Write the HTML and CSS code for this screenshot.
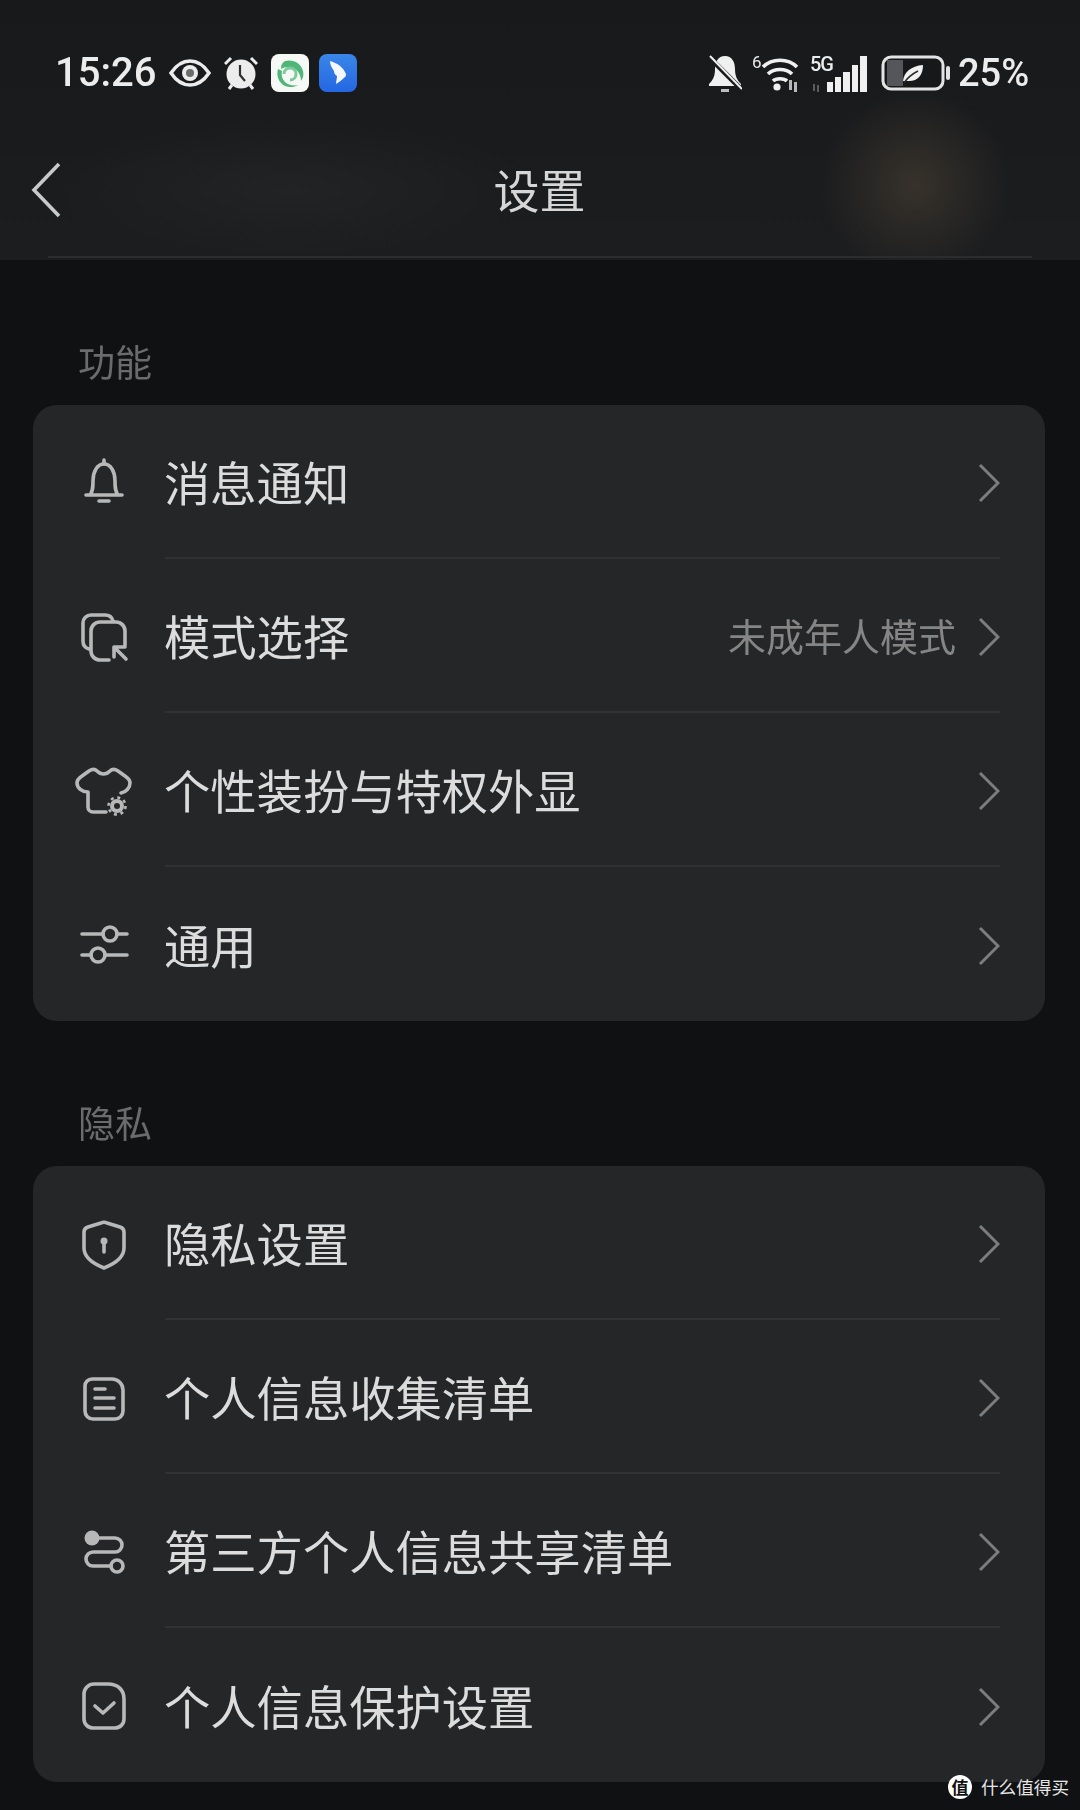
FILE: index.html
```html
<!DOCTYPE html>
<html lang="zh-CN">
<head>
    <meta charset="UTF-8">
    <meta name="viewport" content="width=device-width, initial-scale=1.0">
    <title>设置</title>
    <link rel="stylesheet" href="styles.css">
</head>
<body>
    <header class="header">
        <div class="status-bar">
            <div class="status-left">
                <span class="time">15:26</span>
                <svg class="st-eye" viewBox="0 0 42 28"><path d="M2 14C8 5 14 2 21 2s13 3 19 12c-6 9-12 12-19 12S8 23 2 14Z" fill="none" stroke="#ececec" stroke-width="3.5"/><circle cx="21" cy="14" r="8" fill="#ececec"/><circle cx="21" cy="14" r="4" fill="#6b6b6b"/></svg>
                <svg class="st-alarm" viewBox="0 0 34 34"><circle cx="17" cy="18" r="14.5" fill="#ececec"/><path d="M1 8l6-6M33 8l-6-6M5 33l3-4M29 33l-3-4" stroke="#ececec" stroke-width="3"/><path d="M16 9v10l5 6" fill="none" stroke="#2e2f32" stroke-width="2.2"/></svg>
                <svg class="st-app" viewBox="0 0 38 38"><rect width="38" height="38" rx="8" fill="#f6f8f6"/><path d="M14 7c8-2 16 2 18 10 1 4 0 7-2 10 0-6-3-11-8-13-4-2-9-1-12 1 0-4 1-6 4-8Z" fill="#4fb678"/><path d="M7 15c-2 7 1 14 7 17 5 2 10 1 13-1-5 1-10 0-13-3-3-3-4-7-3-11-1-1-3-1-4-2Z" fill="#4fb678"/><path d="M13 20c0-4 3-6 6-6 4 0 6 3 6 6 0 4-3 6-6 6" fill="none" stroke="#7cc99b" stroke-width="3"/></svg>
                <svg class="st-app" viewBox="0 0 38 38"><defs><linearGradient id="blueApp" x1="0" y1="0" x2="0" y2="1"><stop offset="0" stop-color="#3a86e8"/><stop offset="1" stop-color="#2467e2"/></linearGradient></defs><rect width="38" height="38" rx="8" fill="url(#blueApp)"/><path d="M11 7c1 0 3 1 5 2 5 2 9 6 11 11 0 1 0 2-1 3-3 3-6 5-9 7 0-3 1-5 1-8-2-1-3-3-3-5-2-3-4-6-4-10Z" fill="#f4f7fd"/></svg>
            </div>
            <div class="status-right">
                <svg class="st-mute" viewBox="0 0 34 39"><path d="M17 2c7 0 10 6 10 13 0 7 2 11 6 15v2H1v-2c4-4 6-8 6-15 0-7 3-13 10-13Z" fill="#f0f0f0"/><path d="M13 35h8v3h-8z" fill="#bdbdbd"/><path d="M1 3l32 32" stroke="#1a1b1d" stroke-width="5"/><path d="M2 2l32 33" stroke="#f0f0f0" stroke-width="2"/></svg>
                <svg class="st-wifi" viewBox="0 -4 48 46"><text x="0" y="14" class="st-tiny">6</text><path d="M11 13c9-9 25-9 34 0M16 20c6-6 18-6 24 0M21 27c3-3 11-3 14 0" fill="none" stroke="#f0f0f0" stroke-width="3.6"/><circle cx="25" cy="33" r="3.6" fill="#f0f0f0"/><path d="M37 26v10h3V26zM42 28v10h3V28z" fill="#b8b8b8"/></svg>
                <svg class="st-signal" viewBox="0 -4 58 46"><text x="0" y="17" class="st-5g">5G</text><path d="M3 30v7h2v-7zM7 31v7h2v-7z" fill="#5c5c5c"/><path d="M17 28h6v10h-6zM25 23h6v15h-6zM33 18h7v20h-7zM42 11h6v27h-6zM50 2h7v36h-7z" fill="#f0f0f0"/></svg>
                <div class="battery">
                    <svg class="st-batt" viewBox="0 0 70 36"><rect x="2" y="2" width="60" height="32" rx="8" fill="#17181a" stroke="#e4e4e4" stroke-width="3"/><path d="M6 5h16v26H6z" fill="#55565a"/><path d="M22 26c1-9 8-15 20-16 0 10-5 16-14 16-2 0-4 0-6 0Z" fill="#f0f0f0"/><path d="M23 28c4-6 8-9 14-12" fill="none" stroke="#2a2b2d" stroke-width="1.5"/><rect x="65" y="11" width="4" height="14" rx="2" fill="#e4e4e4"/></svg>
                </div>
                <span class="percent">25%</span>
            </div>
        </div>
        <div class="nav">
            <svg class="back" viewBox="0 0 30 56"><path d="M28 2L3 28l25 26" fill="none" stroke="#c9c9c9" stroke-width="3.6"/></svg>
            <h1 class="title">设置</h1>
            <span></span>
        </div>
        <div class="header-line"></div>
    </header>

    <main>
        <section class="section">
            <h2 class="section-label">功能</h2>
            <div class="card">
                <div class="row">
                    <svg class="row-icon" viewBox="0 0 62 62"><path d="M13 42h36M17 42c3-4 3-8 3-14 0-9 4-17 11-17s11 8 11 17c0 6 0 10 3 14"/><path d="M31 7v4M26 48h10"/></svg>
                    <div class="row-body"><span class="row-text">消息通知</span><svg class="chevron" viewBox="0 0 22 40"><path d="M2 2l18 18L2 38"/></svg></div>
                </div>
                <div class="row">
                    <svg class="row-icon" viewBox="0 0 62 62"><path d="M52 38V24a9 9 0 0 0-9-9H27a9 9 0 0 0-9 9v20a9 9 0 0 0 9 9h9"/><path d="M16 42c-4-1-6-4-6-8V16a8 8 0 0 1 8-8h14c4 0 7 2 8 6"/><path d="M42 41l11 11M41 50V40h11"/></svg>
                    <div class="row-body"><span class="row-text">模式选择</span><span class="row-value">未成年人模式</span><svg class="chevron" viewBox="0 0 22 40"><path d="M2 2l18 18L2 38"/></svg></div>
                </div>
                <div class="row">
                    <svg class="row-icon" viewBox="0 0 62 62"><path d="M33 51H20a5 5 0 0 1-5-5V31C9 31 4 27 4 22c0-3 2-5 5-7l7-5c3-2 6-2 8 0 4 4 9 4 13 0 2-2 5-2 8 0l7 5c3 2 5 4 5 7 0 5-4 9-9 10"/><circle cx="44" cy="45" r="5" stroke-width="4"/><circle cx="44" cy="45" r="8.5" stroke-width="2.6" stroke-dasharray="3 3.68" stroke-linecap="butt"/></svg>
                    <div class="row-body"><span class="row-text">个性装扮与特权外显</span><svg class="chevron" viewBox="0 0 22 40"><path d="M2 2l18 18L2 38"/></svg></div>
                </div>
                <div class="row">
                    <svg class="row-icon" viewBox="0 0 62 62"><path d="M9 19h21M44 19h10M9 40h9M32 40h22"/><circle cx="37" cy="19" r="7"/><circle cx="25" cy="40" r="7"/></svg>
                    <div class="row-body row-last"><span class="row-text">通用</span><svg class="chevron" viewBox="0 0 22 40"><path d="M2 2l18 18L2 38"/></svg></div>
                </div>
            </div>
        </section>

        <section class="section">
            <h2 class="section-label">隐私</h2>
            <div class="card">
                <div class="row">
                    <svg class="row-icon" viewBox="0 0 62 62"><path d="M28 9L15 13c-3 1-4 2-4 5v16c0 9 10 16 20 20 10-4 20-11 20-20V18c0-3-1-4-4-5L34 9c-2-1-4-1-6 0Z"/><path d="M31 28v10"/><circle class="solid" cx="31" cy="27" r="3.5"/></svg>
                    <div class="row-body"><span class="row-text">隐私设置</span><svg class="chevron" viewBox="0 0 22 40"><path d="M2 2l18 18L2 38"/></svg></div>
                </div>
                <div class="row">
                    <svg class="row-icon" viewBox="0 0 62 62"><path d="M19 11h20c6 0 11 5 11 11v21a8 8 0 0 1-8 8H20a8 8 0 0 1-8-8V18a7 7 0 0 1 7-7Z"/><path d="M22 21h10M22 30h19M22 40h19"/></svg>
                    <div class="row-body"><span class="row-text">个人信息收集清单</span><svg class="chevron" viewBox="0 0 22 40"><path d="M2 2l18 18L2 38"/></svg></div>
                </div>
                <div class="row">
                    <svg class="row-icon" viewBox="0 0 62 62"><circle class="solid" cx="19" cy="16" r="7.5"/><path d="M19 16h23a7 7 0 0 1 0 14H20a7 7 0 0 0 0 14h18"/><circle cx="44" cy="44" r="6"/></svg>
                    <div class="row-body"><span class="row-text">第三方个人信息共享清单</span><svg class="chevron" viewBox="0 0 22 40"><path d="M2 2l18 18L2 38"/></svg></div>
                </div>
                <div class="row">
                    <svg class="row-icon" viewBox="0 0 62 62"><path d="M21 8h14c10 0 16 6 16 15v20a9 9 0 0 1-9 9H20a9 9 0 0 1-9-9V18A10 10 0 0 1 21 8Z"/><path d="M22 30l8 7 11-10"/></svg>
                    <div class="row-body row-last"><span class="row-text">个人信息保护设置</span><svg class="chevron" viewBox="0 0 22 40"><path d="M2 2l18 18L2 38"/></svg></div>
                </div>
            </div>
        </section>
    </main>

    <div class="watermark">
        <span class="watermark-logo">值</span>
        <span class="watermark-text">什么值得买</span>
    </div>
</body>
</html>
```

FILE: styles.css
```css
body {
    position: relative;
    width: 1080px;
    height: 1810px;
    margin: 0;
    overflow: hidden;
    background-color: #101113;
    font-family: "Noto Sans CJK SC", "Noto Sans", sans-serif;
}

/* the reference is a soft, upscaled phone capture */
.header, main {
    filter: blur(0.5px);
}

.header {
    height: 260px;
    box-sizing: border-box;
    display: flex;
    flex-direction: column;
    background:
        radial-gradient(circle 95px at 915px 185px, #37322a 0%, #2a2826 45%, rgba(28, 29, 31, 0) 100%),
        radial-gradient(ellipse 240px 70px at 290px 190px, #222325 0%, rgba(28, 29, 31, 0) 100%),
        linear-gradient(#18191b, #1c1d1f);
}
.status-bar {
    height: 58px;
    margin-top: 44px;
    padding: 0 50px 0 55px;
    display: flex;
    justify-content: space-between;
    align-items: center;
}
.status-left, .status-right {
    display: flex;
    align-items: center;
}
.status-right svg, .status-left svg {
    display: block;
}
.time, .percent {
    font-family: Roboto, "Noto Sans", sans-serif;
    font-size: 40px;
    font-weight: 500;
    line-height: 58px;
    color: #ececec;
}
.time {
    width: 100px;
    white-space: nowrap;
}
.percent {
    margin-left: 7px;
    font-size: 38px;
    width: 72px;
    white-space: nowrap;
}
.st-eye { width: 42px; height: 28px; margin-left: 14px; }
.st-alarm { width: 34px; height: 34px; margin-left: 13px; }
.st-app { width: 38px; height: 38px; margin-left: 13px; }
.st-app + .st-app { margin-left: 10px; }
.st-mute { width: 34px; height: 39px; }
.st-wifi { width: 48px; height: 46px; margin-left: 10px; }
.st-signal { width: 58px; height: 46px; margin-left: 10px; }
.st-batt { width: 70px; height: 36px; }
.battery { margin-left: 13px; }
.st-tiny {
    font-family: Roboto, sans-serif;
    font-size: 17px;
    fill: #ececec;
}
.st-5g {
    font-family: Roboto, sans-serif;
    font-size: 20px;
    font-weight: 500;
    letter-spacing: -1px;
    fill: #ececec;
}

.nav {
    height: 136px;
    margin-top: 18px;
    padding-left: 31px;
    display: grid;
    grid-template-columns: 1fr auto 1fr;
    align-items: center;
}
.back {
    width: 30px;
    height: 56px;
    margin-top: 4px;
}
.title {
    margin: 0;
    font-size: 46px;
    font-weight: 400;
    color: #d6d6d6;
    position: relative;
    left: -16px;
}
.header-line {
    height: 2px;
    margin: 0 48px;
    background-color: #2b2c2e;
}

.section {
    margin-top: 76px;
}
.section-label {
    margin: 0 0 19px;
    padding-left: 78px;
    font-size: 37px;
    font-weight: 400;
    line-height: 50px;
    color: #6a6b6d;
}
.card {
    width: 1012px;
    margin-left: 33px;
    border-radius: 24px;
    background-color: #252628;
}
.row {
    height: 154px;
    padding-left: 40px;
    display: flex;
    align-items: stretch;
}
.row-icon {
    width: 62px;
    height: 62px;
    margin-top: 48px;
    margin-right: 30px;
    fill: none;
    stroke: #b8b8b8;
    stroke-width: 3.6;
    stroke-linecap: round;
    stroke-linejoin: round;
}
.row-icon .solid {
    fill: #b8b8b8;
    stroke: none;
}
.row-body {
    flex: 1;
    margin-right: 45px;
    padding-top: 4px;
    box-sizing: border-box;
    display: flex;
    align-items: center;
    border-bottom: 2px solid #313234;
}
.row-last {
    border-bottom: none;
}
.row-text {
    flex: 1;
    margin-left: -1px;
    padding-bottom: 5px;
    font-size: 46.3px;
    color: #dcdcdc;
    white-space: nowrap;
}
.row-value {
    margin-right: 22px;
    padding-bottom: 5px;
    font-size: 38px;
    color: #858585;
    white-space: nowrap;
}
.chevron {
    width: 22px;
    height: 40px;
    fill: none;
    stroke: #7d7d7d;
    stroke-width: 3;
}

.watermark {
    position: absolute;
    right: 11px;
    bottom: 11px;
    display: flex;
    align-items: center;
    gap: 9px;
}
.watermark-logo {
    width: 24px;
    height: 24px;
    border-radius: 50%;
    background-color: #fff;
    color: #111;
    font-size: 17px;
    font-weight: 700;
    line-height: 24px;
    text-align: center;
}
.watermark-text {
    font-size: 17.6px;
    line-height: 24px;
    color: #e6e6e6;
    white-space: nowrap;
}
```
